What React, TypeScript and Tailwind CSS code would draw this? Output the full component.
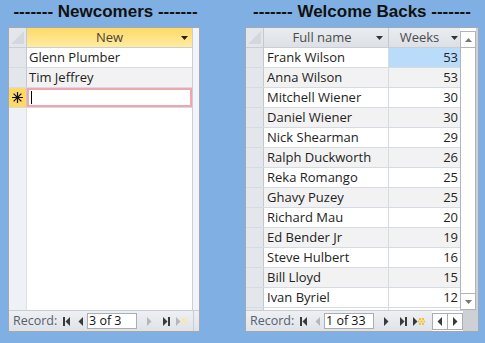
import React from 'react';

const font = { fontFamily: '"Liberation Sans", Arial, sans-serif' };
const body = '[font-family:"Open_Sans",Calibri,sans-serif]';

const backs: [string, number][] = [
  ['Frank Wilson', 53],
  ['Anna Wilson', 53],
  ['Mitchell Wiener', 30],
  ['Daniel Wiener', 30],
  ['Nick Shearman', 29],
  ['Ralph Duckworth', 26],
  ['Reka Romango', 25],
  ['Ghavy Puzey', 25],
  ['Richard Mau', 20],
  ['Ed Bender Jr', 19],
  ['Steve Hulbert', 16],
  ['Bill Lloyd', 15],
  ['Ivan Byriel', 12],
];

function Caret({ color = '#333' }: { color?: string }) {
  return (
    <svg width="7" height="4" viewBox="0 0 7 4">
      <path d="M0 0h7L3.5 4z" fill={color} />
    </svg>
  );
}

function Star() {
  return (
    <svg width="11" height="11" viewBox="0 0 11 11" stroke="#111" strokeWidth="1.2">
      <path d="M5.5 0v11M0 5.5h11M1.6 1.6l7.8 7.8M9.4 1.6l-7.8 7.8" />
    </svg>
  );
}

function NavIcon({ kind, off }: { kind: 'first' | 'prev' | 'next' | 'last' | 'new'; off?: boolean }) {
  const c = off ? '#b4b8bd' : '#3a3a3a';
  if (kind === 'first')
    return (
      <svg width="8" height="9" viewBox="0 0 8 9">
        <rect x="0" y="0" width="2" height="9" fill={c} />
        <path d="M7 0v9L2.5 4.5z" fill={c} />
      </svg>
    );
  if (kind === 'prev')
    return (
      <svg width="6" height="9" viewBox="0 0 6 9">
        <path d="M5 0v9L0.5 4.5z" fill={c} />
      </svg>
    );
  if (kind === 'next')
    return (
      <svg width="6" height="9" viewBox="0 0 6 9">
        <path d="M1 0v9l4.5-4.5z" fill={c} />
      </svg>
    );
  if (kind === 'last')
    return (
      <svg width="8" height="9" viewBox="0 0 8 9">
        <path d="M0 0v9l4.5-4.5z" fill={c} />
        <rect x="5" y="0" width="2" height="9" fill={c} />
      </svg>
    );
  const star = off ? '#f6e7b0' : '#f2c230';
  return (
    <svg width="12" height="9" viewBox="0 0 12 9">
      <path d="M0 0v9l4.5-4.5z" fill={c} />
      <g fill={star}>
        <rect x="6" y="1" width="2" height="2" />
        <rect x="9" y="1" width="2" height="2" />
        <rect x="6" y="6" width="2" height="2" />
        <rect x="9" y="6" width="2" height="2" />
        <rect x="7.5" y="3.5" width="2" height="2" />
        <rect x="5" y="3.5" width="1.5" height="2" />
        <rect x="10.5" y="3.5" width="1.5" height="2" />
      </g>
    </svg>
  );
}

function Footer({ text, prevOff, nextOff, newOff, scroll }: { text: string; prevOff?: boolean; nextOff?: boolean; newOff?: boolean; scroll?: boolean }) {
  return (
    <div className={`flex h-[21px] items-center border-t border-[#c9ced6] bg-gradient-to-b from-[#eef0f3] to-[#dfe2e7] ${body}`}>
      <span className="ml-[4px] w-[40px] text-[12.5px] text-[#56606e]">Record:</span>
      <span className="ml-[7px] flex w-[14px] justify-center"><NavIcon kind="first" /></span>
      <span className="ml-[3px] flex w-[8px] justify-center"><NavIcon kind="prev" off={prevOff} /></span>
      <div className="ml-[2px] flex h-[16px] w-[50px] items-center border border-[#a9aeb5] bg-white pl-[1px] text-[12.5px] text-[#111]">
        {text}
      </div>
      <span className="ml-[8px] flex w-[8px] justify-center"><NavIcon kind="next" off={nextOff} /></span>
      <span className="ml-[9px] flex w-[10px] justify-center"><NavIcon kind="last" /></span>
      <span className="ml-[3px] flex w-[13px] justify-center"><NavIcon kind="new" off={newOff} /></span>
      {scroll ? (
        <div className="ml-[7px] flex h-full items-center bg-white">
          <div className="flex h-[17px] w-[31px] border border-[#a9aeb5] bg-white">
            <span className="flex w-[15px] items-center justify-center border-r border-[#a9aeb5]"><NavIcon kind="prev" /></span>
            <span className="flex w-[15px] items-center justify-center"><NavIcon kind="next" /></span>
          </div>
        </div>
      ) : (
        <div className="ml-auto h-full w-[6px] border-l border-[#c9ced6]" />
      )}
      {scroll && <div className="h-full flex-1 bg-[#cdd0d4]" />}
    </div>
  );
}

function Corner() {
  return (
    <div className="relative w-[18px] shrink-0 border-r border-[#c4c9d1] bg-[#e3e6eb]">
      <svg className="absolute left-[2px] top-[3px]" width="13" height="13" viewBox="0 0 13 13">
        <path d="M13 0v13H0z" fill="#d4d8de" />
      </svg>
    </div>
  );
}

function Newcomers() {
  const names = ['Glenn Plumber', 'Tim Jeffrey'];
  return (
    <div className="flex w-[192px] flex-col">
      <div className="flex h-[27px] items-center justify-center pb-[4px] pl-[3px] text-[17px] font-bold text-[#111]">------- Newcomers -------</div>
      <div className={`flex h-[305px] flex-col border border-[#a3a9b1] bg-white ${body}`}>
        <div className="flex flex-1">
          <div className="flex w-[183px] flex-col">
            <div className="flex h-[20px] border-b border-[#c9ced6]">
              <Corner />
              <div className="relative flex flex-1 items-center justify-center bg-gradient-to-b from-[#fed966] to-[#ffec9f] text-[13px] text-[#4b4338]">
                New
                <span className="absolute right-[4px] top-[8px] flex"><Caret color="#222" /></span>
              </div>
            </div>
            {names.map((n, i) => (
              <div key={n} className={`flex h-[20px] border-b border-[#d5dae3] ${i % 2 ? 'bg-[#f2f2f2]' : 'bg-white'}`}>
                <div className="w-[18px] shrink-0 border-r border-[#c4c9d1] bg-[#e3e6eb]" />
                <div className="flex flex-1 items-center pl-[2px] text-[13px] text-[#222]">{n}</div>
              </div>
            ))}
            <div className="flex h-[20px] border-b border-[#d5dae3]">
              <div className="flex w-[18px] shrink-0 items-center justify-center border-r border-[#c4c9d1] bg-[#ffd966]"><Star /></div>
              <div className="flex flex-1 items-center border-2 border-[#f3a5ad] pl-[2px]">
                <div className="h-[13px] w-[1px] bg-black" />
              </div>
            </div>
            <div className="flex flex-1">
              <div className="w-[18px] shrink-0 border-r border-[#dde2ea] bg-[#eef1f6]" />
              <div className="flex-1 bg-white" />
            </div>
          </div>
          <div className="flex-1 border-l border-[#c9ced6] bg-[#f1f4f9]" />
        </div>
        <Footer text="3 of 3" nextOff newOff />
      </div>
    </div>
  );
}

function WelcomeBacks() {
  return (
    <div className="flex w-[234px] flex-col">
      <div className="flex h-[27px] items-center justify-center pb-[4px] text-[17px] font-bold text-[#111]">------- Welcome Backs -------</div>
      <div className={`flex h-[305px] flex-col border border-[#a3a9b1] bg-white ${body}`}>
        <div className="flex flex-1 overflow-hidden">
          <div className="flex w-[214px] flex-col">
            <div className="flex h-[20px] border-b border-[#c9ced6] bg-gradient-to-b from-[#e9ecf0] to-[#dde1e6]">
              <Corner />
              <div className="relative flex w-[125px] items-center justify-center border-r border-[#c4c9d1] pr-[8px] text-[13px] text-[#4b4b4b]">
                Full name
                <span className="absolute right-[5px] top-[8px] flex"><Caret /></span>
              </div>
              <div className="relative flex flex-1 items-center justify-center pr-[10px] text-[13px] text-[#4b4b4b]">
                Weeks
                <span className="absolute right-[2px] top-[8px] flex"><Caret /></span>
              </div>
            </div>
            {backs.map(([n, w], i) => (
              <div key={n} className={`flex h-[20px] shrink-0 border-b border-[#d5dae3] ${i % 2 ? 'bg-[#f2f2f2]' : 'bg-white'}`}>
                <div className="w-[18px] shrink-0 border-r border-[#c4c9d1] bg-[#e3e6eb]" />
                <div className={`flex w-[125px] items-center border-r border-[#d5dae3] pl-[3px] text-[13px] text-[#222] ${i === 0 ? 'bg-white' : ''}`}>{n}</div>
                <div className={`flex flex-1 items-center justify-end pr-[2px] text-[13px] text-[#222] ${i === 0 ? 'bg-[#b9dcfb]' : ''}`}>{w}</div>
              </div>
            ))}
            <div className="flex flex-1">
              <div className="w-[18px] shrink-0 border-r border-[#c4c9d1] bg-[#e3e6eb]" />
              <div className="w-[125px] border-r border-[#d5dae3]" />
            </div>
          </div>
          <div className="flex flex-1 flex-col bg-white pt-[3px]">
            <div className="flex flex-1 flex-col border border-[#b0b5bc]">
              <div className="flex h-[16px] items-center justify-center border-b border-[#b0b5bc]">
                <svg width="7" height="4" viewBox="0 0 7 4"><path d="M0 4h7L3.5 0z" fill="#777" /></svg>
              </div>
              <div className="flex-1" />
              <div className="flex h-[16px] items-center justify-center border-t border-[#b0b5bc]">
                <Caret color="#777" />
              </div>
            </div>
          </div>
          <div className="w-[2px] bg-[#cdd0d4]" />
        </div>
        <Footer text="1 of 33" prevOff scroll />
      </div>
    </div>
  );
}

export default function App() {
  return (
    <div className="flex h-[343px] w-[485px] gap-[45px] bg-[#80b0e3] pl-[8px]" style={font}>
      <Newcomers />
      <WelcomeBacks />
    </div>
  );
}
